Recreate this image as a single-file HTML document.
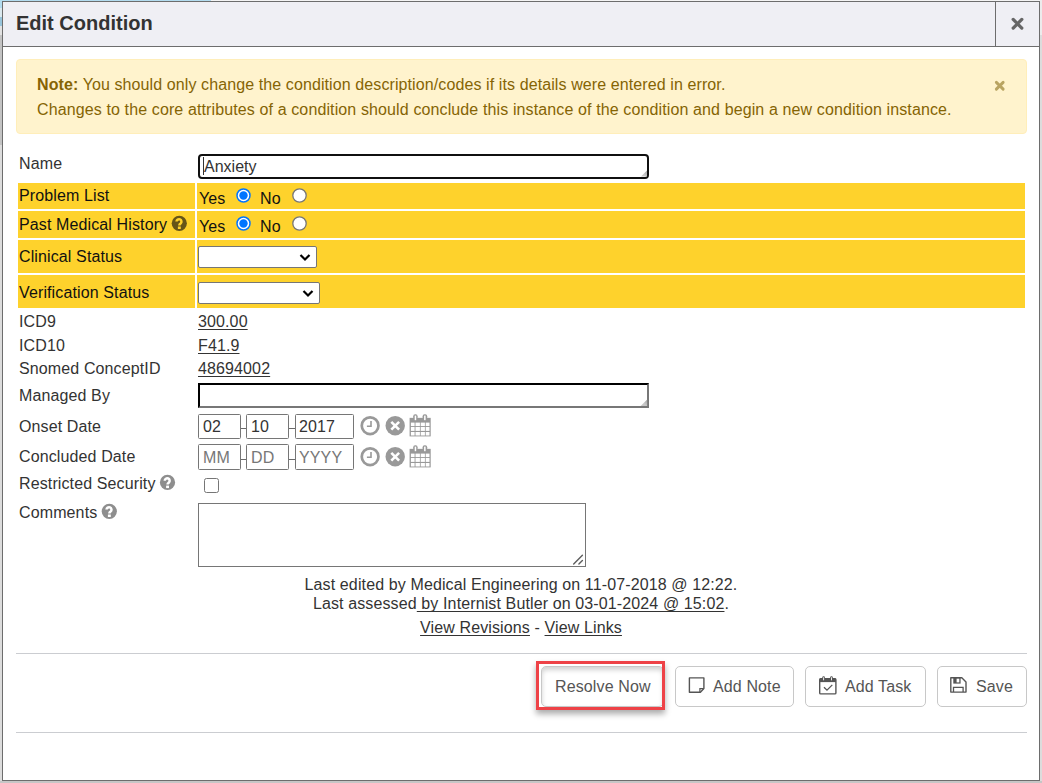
<!DOCTYPE html>
<html><head><meta charset="utf-8">
<style>
*{box-sizing:border-box;margin:0;padding:0}
html,body{width:1042px;height:783px;overflow:hidden;background:#c8c8c8;font-family:"Liberation Sans",sans-serif;font-size:16px;color:#333;letter-spacing:0.12px}
.a{position:absolute;white-space:nowrap}
.t{line-height:18px}
#dlg{position:absolute;left:2px;top:1px;width:1038px;height:780px;background:#fff;border:1px solid #6d6d6d}
#hdr{position:absolute;left:0;top:0;width:1036px;height:45px;background:#efeff4;border-bottom:1px solid #6d6d6d}
#hdr .title{left:13px;top:9.5px;font-weight:bold;font-size:20px;line-height:23px;color:#333;letter-spacing:0}
#hdr .cls{left:992px;top:0;width:44px;height:45px;border-left:1px solid #6d6d6d}
.alert{left:16px;top:59px;width:1011px;height:75px;background:#fff3cd;border:1px solid #ffeeba;border-radius:4px;color:#856404}
.yel{position:absolute;background:#fed22c}
.lbl{color:#333}
.ylbl{color:#111}
a{color:#333;text-decoration:underline;text-underline-offset:2px;text-decoration-skip-ink:none}
.sel{position:absolute;height:22px;background:#fff;border:1px solid #767676;border-radius:2px}
.date{position:absolute;height:25px;border:1px solid #767676;border-radius:1.5px;background:#fff;padding-left:4px;line-height:23px}
.ph{color:#777;height:26px;line-height:25px}
.dash{position:absolute;height:1px;width:5px;background:#6a6a6a}
.btn{position:absolute;top:666px;height:41px;border:1px solid #c8c8c8;border-radius:5px;background:#fff}
.hr{position:absolute;background:#cbcdd1}
</style></head><body>
<div class="a" style="left:0;top:0;width:211px;height:1px;background:#b3dcef"></div>
<div class="a" style="left:211px;top:0;width:831px;height:1px;background:#f4f4f4"></div>
<div class="a" style="left:0;top:0;width:2px;height:8px;background:#b3dcef"></div>
<div class="a" style="left:0;top:8px;width:2px;height:9px;background:#dbe9ef"></div>
<div class="a" style="left:0;top:17px;width:2px;height:9px;background:#98c4da"></div>
<div class="a" style="left:0;top:26px;width:2px;height:9px;background:#e2e2e2"></div>
<div class="a" style="left:1040px;top:0;width:2px;height:35px;background:#ececec"></div>
<div class="a" style="left:1040px;top:35px;width:2px;height:748px;background:#dcdcdc"></div>
<div class="a" style="left:0;top:35px;width:2px;height:110px;background:#c3c3c3"></div>
<div class="a" style="left:0;top:145px;width:2px;height:638px;background:#dcdcdc"></div>
<div class="a" style="left:0;top:781px;width:1042px;height:2px;background:#c6c6c6"></div>
<div id="dlg">
  <div id="hdr">
    <div class="a title">Edit Condition</div>
    <div class="a cls">
      <svg width="45" height="45" style="position:absolute;left:0;top:0"><path d="M17.2 17.45 L25.8 26.05 M25.8 17.45 L17.2 26.05" stroke="#666" stroke-width="3.3" stroke-linecap="round"/></svg>
    </div>
  </div>
</div>

<div class="a alert"></div>
<div class="a t" style="left:37px;top:76px;color:#856404;letter-spacing:0.1px"><b>Note:</b> You should only change the condition description/codes if its details were entered in error.</div>
<div class="a t" style="left:37px;top:101px;color:#856404">Changes to the core attributes of a condition should conclude this instance of the condition and begin a new condition instance.</div>
<svg class="a" style="left:993px;top:79px" width="14" height="14"><path d="M3.35 3.35 L10.15 10.15 M10.15 3.35 L3.35 10.15" stroke="#b9a462" stroke-width="2.9" stroke-linecap="round"/></svg>

<!-- yellow rows -->
<div class="yel" style="left:18px;top:183px;width:177px;height:26px"></div>
<div class="yel" style="left:197px;top:183px;width:828px;height:26px"></div>
<div class="yel" style="left:18px;top:211px;width:177px;height:27px"></div>
<div class="yel" style="left:197px;top:211px;width:828px;height:27px"></div>
<div class="yel" style="left:18px;top:240px;width:177px;height:33px"></div>
<div class="yel" style="left:197px;top:240px;width:828px;height:33px"></div>
<div class="yel" style="left:18px;top:275px;width:177px;height:33px"></div>
<div class="yel" style="left:197px;top:275px;width:828px;height:33px"></div>

<!-- labels -->
<div class="a t lbl" style="left:19px;top:155px">Name</div>
<div class="a t ylbl" style="left:19px;top:187px">Problem List</div>
<div class="a t ylbl" style="left:19px;top:216px">Past Medical History</div>
<div class="a t ylbl" style="left:19px;top:248px">Clinical Status</div>
<div class="a t ylbl" style="left:19px;top:284px">Verification Status</div>
<div class="a t lbl" style="left:19px;top:313px">ICD9</div>
<div class="a t lbl" style="left:19px;top:337px">ICD10</div>
<div class="a t lbl" style="left:19px;top:360px">Snomed ConceptID</div>
<div class="a t lbl" style="left:19px;top:387px">Managed By</div>
<div class="a t lbl" style="left:19px;top:418px">Onset Date</div>
<div class="a t lbl" style="left:19px;top:448px">Concluded Date</div>
<div class="a t lbl" style="left:19px;top:475px">Restricted Security</div>
<div class="a t lbl" style="left:19px;top:504px">Comments</div>

<!-- question icons -->
<svg class="a" style="left:171px;top:215px" width="17" height="17" viewBox="0 0 17 17"><g transform="translate(0.30,0.30)"><circle cx="8" cy="8" r="7.6" fill="#665518"/><path d="M5.25 6.3 A2.45 2.45 0 1 1 9.4 8.1 L8.7 8.7 Q8.1 9.2 8.1 10.2" fill="none" stroke="#fed22c" stroke-width="2.5"/><rect x="6.6" y="11.2" width="2.9" height="2.5" fill="#fed22c"/></g></svg>
<svg class="a" style="left:159px;top:474px" width="17" height="17" viewBox="0 0 17 17"><g transform="translate(0.50,0.40)"><circle cx="8" cy="8" r="7.6" fill="#8e8e8e"/><path d="M5.25 6.3 A2.45 2.45 0 1 1 9.4 8.1 L8.7 8.7 Q8.1 9.2 8.1 10.2" fill="none" stroke="#fff" stroke-width="2.5"/><rect x="6.6" y="11.2" width="2.9" height="2.5" fill="#fff"/></g></svg>
<svg class="a" style="left:101px;top:503px" width="17" height="17" viewBox="0 0 17 17"><g transform="translate(0.30,0.30)"><circle cx="8" cy="8" r="7.6" fill="#8e8e8e"/><path d="M5.25 6.3 A2.45 2.45 0 1 1 9.4 8.1 L8.7 8.7 Q8.1 9.2 8.1 10.2" fill="none" stroke="#fff" stroke-width="2.5"/><rect x="6.6" y="11.2" width="2.9" height="2.5" fill="#fff"/></g></svg>

<!-- Name textarea (focused) -->
<div class="a" style="left:198px;top:154px;width:451px;height:25px;border:2px solid #101010;border-radius:4px;background:#fff"></div>
<div class="a" style="left:203px;top:157px;width:1px;height:18px;background:#333"></div>
<div class="a t" style="left:204px;top:158px;color:#333;letter-spacing:0">Anxiety</div>

<!-- radios -->
<div class="a t ylbl" style="left:199px;top:190px">Yes</div>
<div class="a t ylbl" style="left:260px;top:190px">No</div>
<div class="a t ylbl" style="left:199px;top:218px">Yes</div>
<div class="a t ylbl" style="left:260px;top:218px">No</div>
<svg class="a" style="left:236px;top:188px" width="15" height="15"><circle cx="7.5" cy="7.5" r="6.5" fill="#fff" stroke="#0075ff" stroke-width="1.5"/><circle cx="7.5" cy="7.5" r="4.2" fill="#0075ff"/></svg>
<svg class="a" style="left:292px;top:188px" width="15" height="15"><circle cx="7.5" cy="7.5" r="6.7" fill="#fff" stroke="#767676" stroke-width="1.3"/></svg>
<svg class="a" style="left:236px;top:216px" width="15" height="15"><circle cx="7.5" cy="7.5" r="6.5" fill="#fff" stroke="#0075ff" stroke-width="1.5"/><circle cx="7.5" cy="7.5" r="4.2" fill="#0075ff"/></svg>
<svg class="a" style="left:292px;top:216px" width="15" height="15"><circle cx="7.5" cy="7.5" r="6.7" fill="#fff" stroke="#767676" stroke-width="1.3"/></svg>

<!-- selects -->
<div class="sel" style="left:198px;top:246px;width:119px"></div>
<svg class="a" style="left:298px;top:252px" width="14" height="12"><path d="M2.5 3 L7 7.5 L11.5 3" fill="none" stroke="#000" stroke-width="2.2"/></svg>
<div class="sel" style="left:198px;top:282px;width:122px"></div>
<svg class="a" style="left:301px;top:288px" width="14" height="12"><path d="M2.5 3 L7 7.5 L11.5 3" fill="none" stroke="#000" stroke-width="2.2"/></svg>

<!-- codes -->
<div class="a t" style="left:198px;top:313px"><a>300.00</a></div>
<div class="a t" style="left:198px;top:337px"><a>F41.9</a></div>
<div class="a t" style="left:198px;top:360px"><a>48694002</a></div>

<!-- Managed By textarea -->
<div class="a" style="left:198px;top:383px;width:451px;height:25px;border:2px solid;border-color:#000 #777 #777 #000;background:#fff"></div>

<!-- dates -->
<div class="date" style="left:198px;top:414px;width:43px">02</div>
<div class="dash" style="left:241px;top:428px"></div>
<div class="date" style="left:246px;top:414px;width:43px">10</div>
<div class="dash" style="left:289px;top:428px;width:6px"></div>
<div class="date" style="left:295px;top:414px;width:59px;padding-left:3px">2017</div>

<div class="date ph" style="left:198px;top:444px;width:43px">MM</div>
<div class="dash" style="left:241px;top:459px"></div>
<div class="date ph" style="left:246px;top:444px;width:43px">DD</div>
<div class="dash" style="left:289px;top:459px;width:6px"></div>
<div class="date ph" style="left:295px;top:444px;width:59px;padding-left:3px">YYYY</div>

<svg class="a" style="left:356px;top:410px" width="80" height="30" viewBox="0 0 80 30">
<circle cx="14.1" cy="15.7" r="8.35" fill="none" stroke="#999" stroke-width="2.7"/>
<path d="M15 11.1 V16.3 H10.9" fill="none" stroke="#999" stroke-width="1.6"/>
<circle cx="39.2" cy="15.7" r="9.7" fill="#999"/>
<path d="M35.3 11.8 L43.1 19.6 M43.1 11.8 L35.3 19.6" stroke="#fff" stroke-width="2.6"/>
<g transform="translate(49,0)">
<rect x="4.6" y="7.85" width="21.1" height="18.55" fill="#999"/>
<g fill="#fff">
<rect x="5.9" y="12.6" width="3.7" height="3.5"/><rect x="10.5" y="12.6" width="4.4" height="3.5"/><rect x="15.7" y="12.6" width="4.2" height="3.5"/><rect x="20.7" y="12.6" width="3.8" height="3.5"/>
<rect x="5.9" y="17" width="3.7" height="3.9"/><rect x="10.5" y="17" width="4.4" height="3.9"/><rect x="15.7" y="17" width="4.2" height="3.9"/><rect x="20.7" y="17" width="3.8" height="3.9"/>
<rect x="5.9" y="22" width="3.7" height="3.5"/><rect x="10.5" y="22" width="4.4" height="3.5"/><rect x="15.7" y="22" width="4.2" height="3.5"/><rect x="20.7" y="22" width="3.8" height="3.5"/>
</g>
<rect x="8.2" y="4.2" width="4.4" height="6.8" rx="2" fill="#999"/>
<rect x="17.6" y="4.2" width="4.6" height="6.8" rx="2" fill="#999"/>
<rect x="9.7" y="5.6" width="1.5" height="4.6" fill="#fff"/>
<rect x="19.1" y="5.6" width="1.5" height="4.6" fill="#fff"/>
</g>
</svg>
<svg class="a" style="left:356px;top:441px" width="80" height="30" viewBox="0 0 80 30">
<circle cx="14.1" cy="15.7" r="8.35" fill="none" stroke="#999" stroke-width="2.7"/>
<path d="M15 11.1 V16.3 H10.9" fill="none" stroke="#999" stroke-width="1.6"/>
<circle cx="39.2" cy="15.7" r="9.7" fill="#999"/>
<path d="M35.3 11.8 L43.1 19.6 M43.1 11.8 L35.3 19.6" stroke="#fff" stroke-width="2.6"/>
<g transform="translate(49,0)">
<rect x="4.6" y="7.85" width="21.1" height="18.55" fill="#999"/>
<g fill="#fff">
<rect x="5.9" y="12.6" width="3.7" height="3.5"/><rect x="10.5" y="12.6" width="4.4" height="3.5"/><rect x="15.7" y="12.6" width="4.2" height="3.5"/><rect x="20.7" y="12.6" width="3.8" height="3.5"/>
<rect x="5.9" y="17" width="3.7" height="3.9"/><rect x="10.5" y="17" width="4.4" height="3.9"/><rect x="15.7" y="17" width="4.2" height="3.9"/><rect x="20.7" y="17" width="3.8" height="3.9"/>
<rect x="5.9" y="22" width="3.7" height="3.5"/><rect x="10.5" y="22" width="4.4" height="3.5"/><rect x="15.7" y="22" width="4.2" height="3.5"/><rect x="20.7" y="22" width="3.8" height="3.5"/>
</g>
<rect x="8.2" y="4.2" width="4.4" height="6.8" rx="2" fill="#999"/>
<rect x="17.6" y="4.2" width="4.6" height="6.8" rx="2" fill="#999"/>
<rect x="9.7" y="5.6" width="1.5" height="4.6" fill="#fff"/>
<rect x="19.1" y="5.6" width="1.5" height="4.6" fill="#fff"/>
</g>
</svg>
<!-- checkbox -->
<div class="a" style="left:204px;top:478px;width:15px;height:15px;border:1px solid #767676;border-radius:2.5px;background:#fff"></div>

<!-- comments -->
<div class="a" style="left:198px;top:503px;width:388px;height:64px;border:1px solid #767676;background:#fff"></div>

<svg class="a" style="left:638px;top:167px" width="11" height="11"><defs><linearGradient id="gg" x1="0" y1="1" x2="1" y2="0"><stop offset="0.45" stop-color="#c8c8c8"/><stop offset="1" stop-color="#a0a0a0"/></linearGradient></defs><path d="M9 3.5 V9.5 H3 Z" fill="url(#gg)"/></svg>
<svg class="a" style="left:638px;top:396px" width="11" height="11"><path d="M9.2 3.5 V10 H2.7 Z" fill="url(#gg)"/></svg>
<svg class="a" style="left:570px;top:551px" width="16" height="16"><path d="M3.7 13 L12.4 4.3 M8.9 13 L12.4 9.5" stroke="#5e5e5e" stroke-width="1.4" stroke-linecap="round"/></svg>
<!-- footer text -->
<div class="a t" style="left:0;width:1042px;text-align:center;top:576px">Last edited by Medical Engineering on 11-07-2018 @ 12:22.</div>
<div class="a t" style="left:0;width:1042px;text-align:center;top:595px">Last assessed<a> by Internist Butler on 03-01-2024 @ 15:02</a>.</div>
<div class="a t" style="left:0;width:1042px;text-align:center;top:619px"><a>View Revisions</a> - <a>View Links</a></div>

<div class="hr" style="top:653px;left:16px;height:1px;width:1011px"></div>
<div class="hr" style="top:732px;left:16px;height:1px;width:1011px"></div>

<!-- buttons -->
<div class="btn" style="left:541px;width:123px;box-shadow:inset 0 3px 5px rgba(0,0,0,.18)"></div>
<div class="a t" style="left:555px;top:678px;color:#555">Resolve Now</div>
<div class="a" style="left:536px;top:661px;width:129px;height:49px;border:3px solid #ee4247;box-shadow:0 4px 6px rgba(0,0,0,0.33)"></div>

<div class="btn" style="left:675px;width:119px"></div>
<div class="a t" style="left:713px;top:678px;color:#555">Add Note</div>
<div class="btn" style="left:805px;width:121px"></div>
<div class="a t" style="left:845px;top:678px;color:#555">Add Task</div>
<div class="btn" style="left:937px;width:90px"></div>
<div class="a t" style="left:976px;top:678px;color:#555">Save</div>

<svg class="a" style="left:684px;top:672px" width="26" height="26" viewBox="0 0 26 26">
<path d="M5.4 5.9 H19.9 V16.6 L16.4 20.2 H5.4 Z" fill="none" stroke="#555" stroke-width="1.4" stroke-linejoin="round"/>
<path d="M15.9 20.1 V16.6 H19.8" fill="none" stroke="#555" stroke-width="1.2"/>
</svg>
<svg class="a" style="left:814px;top:672px" width="28" height="26" viewBox="0 0 28 26">
<rect x="5.7" y="6.7" width="16.2" height="15.2" rx="1" fill="none" stroke="#555" stroke-width="1.4"/>
<rect x="5.7" y="6.5" width="16.2" height="3.6" fill="#555"/>
<rect x="8.3" y="4.3" width="2.6" height="5" rx="1.2" fill="#555"/>
<rect x="16.2" y="4.3" width="2.6" height="5" rx="1.2" fill="#555"/>
<rect x="9.2" y="5.3" width="0.9" height="3" fill="#fff"/>
<rect x="17.1" y="5.3" width="0.9" height="3" fill="#fff"/>
<path d="M10 15.2 L13 18.2 L18.3 12.9" fill="none" stroke="#555" stroke-width="1.3"/>
</svg>
<svg class="a" style="left:944px;top:672px" width="28" height="26" viewBox="0 0 28 26">
<path d="M6.8 5.7 H17.8 L22 9.9 V20.1 H6.8 Z" fill="none" stroke="#555" stroke-width="1.4" stroke-linejoin="round"/>
<rect x="9.3" y="5.7" width="7.3" height="5.9" fill="#555"/>
<rect x="12.6" y="6.7" width="2.7" height="3.7" fill="#fff"/>
<path d="M9.5 20 V15.4 H19.1 V20" fill="none" stroke="#555" stroke-width="1.3"/>
</svg>
</body></html>
